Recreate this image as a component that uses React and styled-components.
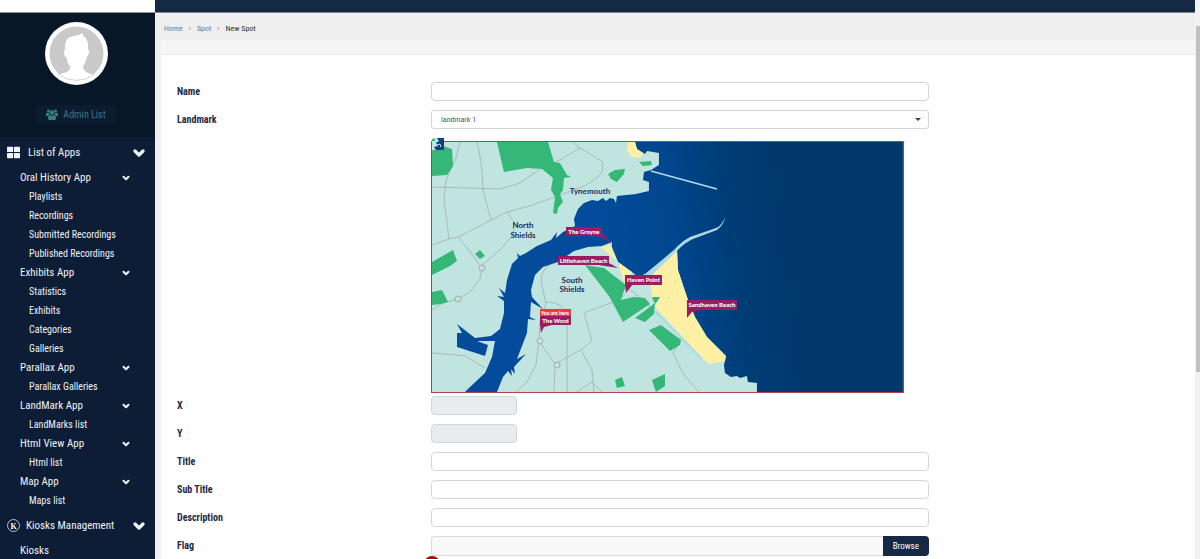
import { ChevronDown } from "lucide-react";
import { FaThLarge } from "react-icons/fa";
import styled, { createGlobalStyle } from "styled-components";

const GlobalStyle = createGlobalStyle`
  * {
    box-sizing: border-box;
  }
  body {
    margin: 0;
    font-family: "Roboto Condensed", "Liberation Sans Narrow", Roboto, sans-serif;
    color: #1d2942;
    background-color: #efefef;
  }
  button,
  input,
  select {
    font-family: inherit;
  }
  a {
    color: inherit;
    text-decoration: none;
  }
`;

const Page = styled.div`
  display: grid;
  grid-template-columns: 155px 1fr 5px;
  height: 100vh;
  overflow: hidden;
`;

const Sidebar = styled.aside`
  background-color: #0c1d35;
  color: #eef2f6;
  overflow: hidden;
`;

const Brand = styled.div`
  height: 13px;
  background-color: white;
  border-bottom: 1px solid #8d949d;
`;

const Profile = styled.div`
  height: 124px;
  padding: 9px 3px 0 0;
  display: flex;
  flex-direction: column;
  align-items: center;
  gap: 20px;
  background-color: #071728;
`;

const Avatar = styled.svg`
  width: 63px;
  height: 63px;
  flex-shrink: 0;
`;

const AdminButton = styled.button`
  width: 80px;
  height: 19px;
  padding: 0;
  display: flex;
  align-items: center;
  justify-content: center;
  gap: 5px;
  border: none;
  background-color: #0b1c30;
  color: #3c7480;
  font-size: 10px;
`;

const Section = styled.button`
  width: 100%;
  height: 31px;
  padding: 0 8px 0 7px;
  display: flex;
  align-items: center;
  gap: ${(props) => props.$gap || "8px"};
  border: none;
  background: none;
  color: inherit;
  font-size: 11px;
  svg:last-child {
    margin-left: auto;
  }
`;

const Group = styled.button`
  width: 100%;
  height: 19px;
  padding: 0 24px 0 20px;
  display: flex;
  align-items: center;
  justify-content: space-between;
  border: none;
  background: none;
  color: inherit;
  font-size: 11px;
`;

const MenuLink = styled.a`
  display: block;
  padding-left: ${(props) => (props.$top ? "20px" : "29px")};
  line-height: 19px;
  font-size: ${(props) => (props.$top ? "11px" : "10px")};
`;

const Main = styled.main`
  display: flex;
  flex-direction: column;
  overflow: hidden;
`;

const TopBar = styled.header`
  height: 13px;
  flex-shrink: 0;
  background-color: #152845;
  border-bottom: 1px solid #7e8794;
`;

const Breadcrumb = styled.nav`
  height: 27px;
  padding: 3px 9px 0;
  flex-shrink: 0;
  display: flex;
  align-items: center;
  gap: 6px;
  color: #777;
  font-size: 8px;
  span {
    color: #333;
  }
`;

const Strip = styled.div`
  height: 14px;
  margin-left: 6px;
  flex-shrink: 0;
  background-color: #f5f5f5;
`;

const Panel = styled.form`
  flex: 1;
  margin-left: 6px;
  padding: 27px 2px 0 16px;
  background-color: #fefefe;
  border-top: 1px solid #e8e8e8;
`;

const Row = styled.div`
  display: grid;
  grid-template-columns: 25% 49%;
  min-height: 20px;
  margin-bottom: ${(props) => props.$space || "8px"};
`;

const Label = styled.label`
  font-size: 10px;
  font-weight: 700;
  line-height: 19px;
`;

const Input = styled.input`
  width: ${(props) => props.$width || "100%"};
  height: 19px;
  border: 1px solid #d3d6d9;
  border-radius: 4px;
  background-color: white;
  &:disabled {
    background-color: #e8ecef;
  }
`;

const SelectBox = styled.div`
  display: grid;
  align-items: center;
  height: 19px;
  > * {
    grid-area: 1 / 1;
  }
`;

const Select = styled.select`
  appearance: none;
  width: 100%;
  height: 19px;
  padding: 0 9px;
  border: 1px solid #d3d6d9;
  border-radius: 3px;
  background-color: white;
  color: #555;
  font-size: 8px;
`;

const Caret = styled.span`
  justify-self: end;
  margin-right: 8px;
  border: 3px solid transparent;
  border-top-color: #444;
  border-bottom: none;
  pointer-events: none;
`;

const MapBox = styled.div`
  position: relative;
  width: 95%;
  padding-top: 3px;
`;

const MapSvg = styled.svg`
  display: block;
  width: 100%;
  border: 1px solid #b2404c;
`;

const Pin = styled.svg`
  position: absolute;
  top: 0;
  left: 1px;
  width: 12px;
  height: 12px;
`;

const FilePicker = styled.div`
  position: relative;
  display: flex;
  height: 20px;
`;

const FileName = styled.input`
  flex: 1;
  border: 1px solid #d8dbde;
  border-right: none;
  border-radius: 4px 0 0 4px;
  background-color: #f8f8f8;
`;

const Browse = styled.button`
  width: 46px;
  padding: 0;
  border: none;
  border-radius: 0 4px 4px 0;
  background-color: #152845;
  color: white;
  font-size: 9px;
`;

const Dot = styled.span`
  position: absolute;
  top: 20px;
  left: -7px;
  width: 16px;
  height: 16px;
  border-radius: 50%;
  background-color: #a90d12;
`;

const Scrollbar = styled.div`
  padding: 26px 0 0 1px;
  background-color: #f1f1f1;
`;

const Thumb = styled.div`
  height: 65%;
  background-color: #c1c1c1;
`;

const groups = [
  {
    name: "Oral History App",
    links: ["Playlists", "Recordings", "Submitted Recordings", "Published Recordings"],
  },
  { name: "Exhibits App", links: ["Statistics", "Exhibits", "Categories", "Galleries"] },
  { name: "Parallax App", links: ["Parallax Galleries"] },
  { name: "LandMark App", links: ["LandMarks list"] },
  { name: "Html View App", links: ["Html list"] },
  { name: "Map App", links: ["Maps list"] },
];

const tags = [
  { text: "The Groyne", x: 566, y: 227, w: 36, h: 9, tip: "592,235 602,234 612,244 601,237" },
  { text: "Littlehaven Beach", x: 558, y: 256, w: 51, h: 9, tip: "592,264 609,263 618,268" },
  { text: "Haven Point", x: 625, y: 275, w: 37, h: 10, tip: "625,284 633,284 626,293" },
  { text: "Sandhaven Beach", x: 687, y: 300, w: 50, h: 10, tip: "687,309 706,309 692,312 687,318" },
  { text: "The Word", x: 540, y: 316, w: 31, h: 9, tip: "540,324 556,324 544,327 541,333" },
];

function CoastMap() {
  return (
    <MapSvg viewBox="432 142 471 250" role="img" aria-label="Tynemouth and South Shields">
      <defs>
        <linearGradient id="sea" gradientUnits="userSpaceOnUse" x1="600" y1="240" x2="780" y2="215">
          <stop offset="0" stopColor="#044b9b" />
          <stop offset="0.4" stopColor="#00478e" />
          <stop offset="0.75" stopColor="#003c75" />
          <stop offset="1" stopColor="#00386c" />
        </linearGradient>
      </defs>
      <rect x="432" y="142" width="471" height="250" fill="#c0e5e0" />
      <g fill="none" stroke="#a6acad" strokeWidth="0.8">
        <path d="M460 142 456 158 446 180 444 200 447 222 449 239M477 142Q482 160 483 190L491 220" />
        <path d="M432 187 500 189 520 183 540 169 560 160 580 148 573 142M580 148 603 162 602 172Q595 182 577 189L560 195 530 206 507 212 491 220 458 237 449 239 432 245" />
        <path d="M507 212 514 222 513 235 500 250 482 265M458 237 469 250 482 268 480 279 470 292 458 299 443 303 432 310M432 353 445 354 465 356 485 368" />
        <path d="M550 265Q537 272 543 290L546 303 540 322 539 341 536 365 527 382 516 392M539 341 555 364 575 353 581 350 592 341 584 313 616 301 625 295M555 364 554 392" />
        <path d="M546 302Q567 302 567 320V392M581 350 592 370 594 392M592 382 577 392M592 382 602 392M620 282 642 299 655 312 680 337 680 342 673 353 684 375 699 392" />
      </g>
      <g fill="#35b777">
        <path d="M432 148 440 145 452 149 453 166 447 175 432 176Z" />
        <path d="M497 142H548L554 162 560 163 567 175 571 177 564 178 563 190 560 194 563 202 558 208 557 214 553 213 555 197 551 190 553 178 542 169 527 168 504 172Z" />
        <path d="M608 174 615 170 625 169 624 174 617 182 611 179ZM639 162 651 161 652 165 643 166Z" />
        <path d="M432 262 453 250 457 261 450 266 432 275ZM475 254 480 250 485 256 480 259Z" />
        <path d="M432 292 442 290 448 302 441 304 432 305Z" />
        <path d="M585 265 604 268 626 285 621 300 634 297 645 298 650 304 623 322 609 296Z" />
        <path d="M635 318 655 303 654 314 645 322ZM649 330 661 325 681 340 680 345 670 351ZM652 297 661 297 655 304ZM615 380 622 377 625 386 617 388ZM652 380 665 374 665 386 656 392Z" />
      </g>
      <path
        fill="url(#sea)"
        d="M635 142 637 149 645 154 647 151 659 153 659 165 651 170 644 172 643 180 649 182 649 191 636 194 617 196 616 203 614 199 610 198 606 201 603 198 598 201 592 200 584 203 578 209 574 219 575 226 563 232 556 238 557 232 551 240 537 246 526 253 520 256 517 253 518 258 512 264 507 280 505 293 499 288 504 297 497 296 504 301 504 313 500 329 491 336 475 338 457 324 462 333 457 333 457 347 485 356 488 345 477 341 495 341 492 357 485 373 470 387 465 392H497L503 377 508 371 512 376 511 369 515 374 514 367 526 354 517 359 527 333 528 319 536 320 530 317 531 302 543 309 532 297 531 290 535 275 543 267 558 262 574 251 588 247 602 246 612 242 612 247 618 262 632 272 638 277 645 274 677 249 678 270 687 297 695 317 707 337 726 356 724 365 725 373 731 377 737 376 740 378 747 376 748 382 757 383 757 392H903V142Z"
      />
      <g fill="#fdf0a5">
        <path d="M628 142H635L637 149 643 153 640 158 632 157 627 151Z" />
        <path d="M601 247 610 245 618 262 632 272 627 290 621 273 619 263Z" />
        <path d="M677 248 678 270 687 297 695 317 707 337 726 356 725 361 710 364 703 359 655 307 660 297 652 297 650 274Z" />
      </g>
      <path d="M656 312 702 359" stroke="#abdce1" strokeWidth="2" />
      <path d="M651 171 717 189" stroke="#b1dceb" strokeWidth="1.5" />
      <path
        d="M642 277 675 249Q681 242 690 237L716 228Q722 226 725 217Q724 225 717 230L693 239Q684 243 677 251L651 276Z"
        fill="#add9e4"
      />
      <g fill="#c0e5e0" stroke="#a6acad">
        <circle cx="482" cy="268" r="3" />
        <circle cx="458" cy="299" r="3" />
        <circle cx="540" cy="341" r="3" />
        <circle cx="557" cy="365" r="3" />
      </g>
      <g fill="#202c5c" fontFamily="Lato, sans-serif" fontWeight="700" fontSize="8" textAnchor="middle">
        <text x="590" y="194">Tynemouth</text>
        <text x="523" y="228">North</text>
        <text x="523" y="238">Shields</text>
        <text x="572" y="283">South</text>
        <text x="572" y="292">Shields</text>
      </g>
      <g fontFamily="Lato, sans-serif" fontWeight="900" fontSize="6" textAnchor="middle">
        {tags.map((tag) => (
          <g key={tag.text}>
            <rect x={tag.x} y={tag.y} width={tag.w} height={tag.h} fill="#9c1c62" />
            <polygon points={tag.tip} fill="#9c1c62" />
            <text x={tag.x + tag.w / 2} y={tag.y + 7} fill="white">
              {tag.text}
            </text>
          </g>
        ))}
        <rect x="540" y="309" width="31" height="7" fill="#e63c3d" />
        <text x="555" y="315" fill="white" fontSize="5">
          You are here
        </text>
      </g>
    </MapSvg>
  );
}

function UsersIcon() {
  return (
    <svg width="12" height="11" viewBox="0 0 24 22" fill="#34807f">
      <circle cx="5" cy="4" r="3" />
      <circle cx="19" cy="4" r="3" />
      <circle cx="12" cy="7" r="4.5" />
      <path d="M0 13V10Q0 7 3 7.500L6 8Q6 10 8 12Q5 12 4 14H2Q0 14 0 13ZM24 13V10Q24 7 21 7.500L18 8Q18 10 16 12Q19 12 20 14H22Q24 14 24 13Z" />
      <path d="M4 19Q4 12 8 12Q12 15 16 12Q20 12 20 19 20 22 17 22H7Q4 22 4 19Z" />
    </svg>
  );
}

function TextRow({ id, label, width, disabled }) {
  return (
    <Row>
      <Label htmlFor={id}>{label}</Label>
      <Input id={id} type="text" $width={width} disabled={disabled} />
    </Row>
  );
}

function SideMenu() {
  return (
    <Sidebar>
      <Brand />
      <Profile>
        <Avatar viewBox="0 0 63 63" role="img" aria-label="Admin">
          <circle cx="31.5" cy="31.5" r="31.5" fill="white" />
          <circle cx="31.5" cy="31.5" r="27" fill="#c9c9c9" />
          <path
            d="M20 27Q19 15 29 14 33 14 38 11L38 14Q44 17 43 27 45 29 43 34 41 35 41 38 40 42 38 44 38 50 46 52 50 53 50 55 32 64 13 54 14 52 19 51 26 49 25 44 22 41 22 36 19 35 19 30Z"
            fill="white"
          />
          <path d="M13 52Q31 65 50 52" fill="none" stroke="#d5d5d5" strokeWidth="1" />
        </Avatar>
        <AdminButton type="button">
          <UsersIcon />
          Admin List
        </AdminButton>
      </Profile>
      <nav>
        <Section type="button">
          <FaThLarge size={13} />
          List of Apps
          <ChevronDown size={16} strokeWidth={5} />
        </Section>
        {groups.map((group) => (
          <div key={group.name}>
            <Group type="button">
              {group.name}
              <ChevronDown size={10} strokeWidth={5} />
            </Group>
            {group.links.map((link) => (
              <MenuLink key={link} href="#">
                {link}
              </MenuLink>
            ))}
          </div>
        ))}
        <Section type="button" $gap="6px">
          <svg width="13" height="13" viewBox="0 0 13 13">
            <circle cx="6.5" cy="6.5" r="6" fill="none" stroke="#dfe6ea" strokeWidth="0.8" />
            <text
              x="6.5"
              y="9.5"
              fill="white"
              fontFamily="Liberation Serif, serif"
              fontWeight="700"
              fontSize="8"
              textAnchor="middle"
            >
              K
            </text>
          </svg>
          Kiosks Management
          <ChevronDown size={16} strokeWidth={5} />
        </Section>
        <MenuLink href="#" $top>
          Kiosks
        </MenuLink>
      </nav>
    </Sidebar>
  );
}

function App() {
  return (
    <>
      <GlobalStyle />
      <Page>
        <SideMenu />
        <Main>
          <TopBar />
          <Breadcrumb>
            <a href="#">Home</a>
            <i>›</i>
            <a href="#">Spot</a>
            <i>›</i>
            <span>New Spot</span>
          </Breadcrumb>
          <Strip />
          <Panel>
            <TextRow id="name" label="Name" />
            <Row>
              <Label htmlFor="landmark">Landmark</Label>
              <SelectBox>
                <Select id="landmark">
                  <option>landmark 1</option>
                </Select>
                <Caret />
              </SelectBox>
            </Row>
            <Row $space="3px">
              <span />
              <MapBox>
                <CoastMap />
                <Pin viewBox="0 0 12 12">
                  <path d="M0 0H12V12H0Z" fill="#c0e5e0" />
                  <path d="M5 0H12V12H4L2 9 6 8 4 5 7 3Z" fill="#07427f" />
                  <path d="M0 1H3V3H0Z" fill="#35b777" />
                  <path d="M5 7 8 6 9 9" stroke="#c0e5e0" fill="none" />
                </Pin>
              </MapBox>
            </Row>
            <TextRow id="x" label="X" width="86px" disabled />
            <TextRow id="y" label="Y" width="86px" disabled />
            <TextRow id="title" label="Title" />
            <TextRow id="subtitle" label="Sub Title" />
            <TextRow id="description" label="Description" />
            <Row>
              <Label htmlFor="flag">Flag</Label>
              <FilePicker>
                <FileName id="flag" type="text" readOnly />
                <Browse type="button">Browse</Browse>
                <Dot />
              </FilePicker>
            </Row>
          </Panel>
        </Main>
        <Scrollbar>
          <Thumb />
        </Scrollbar>
      </Page>
    </>
  );
}

export default App;
